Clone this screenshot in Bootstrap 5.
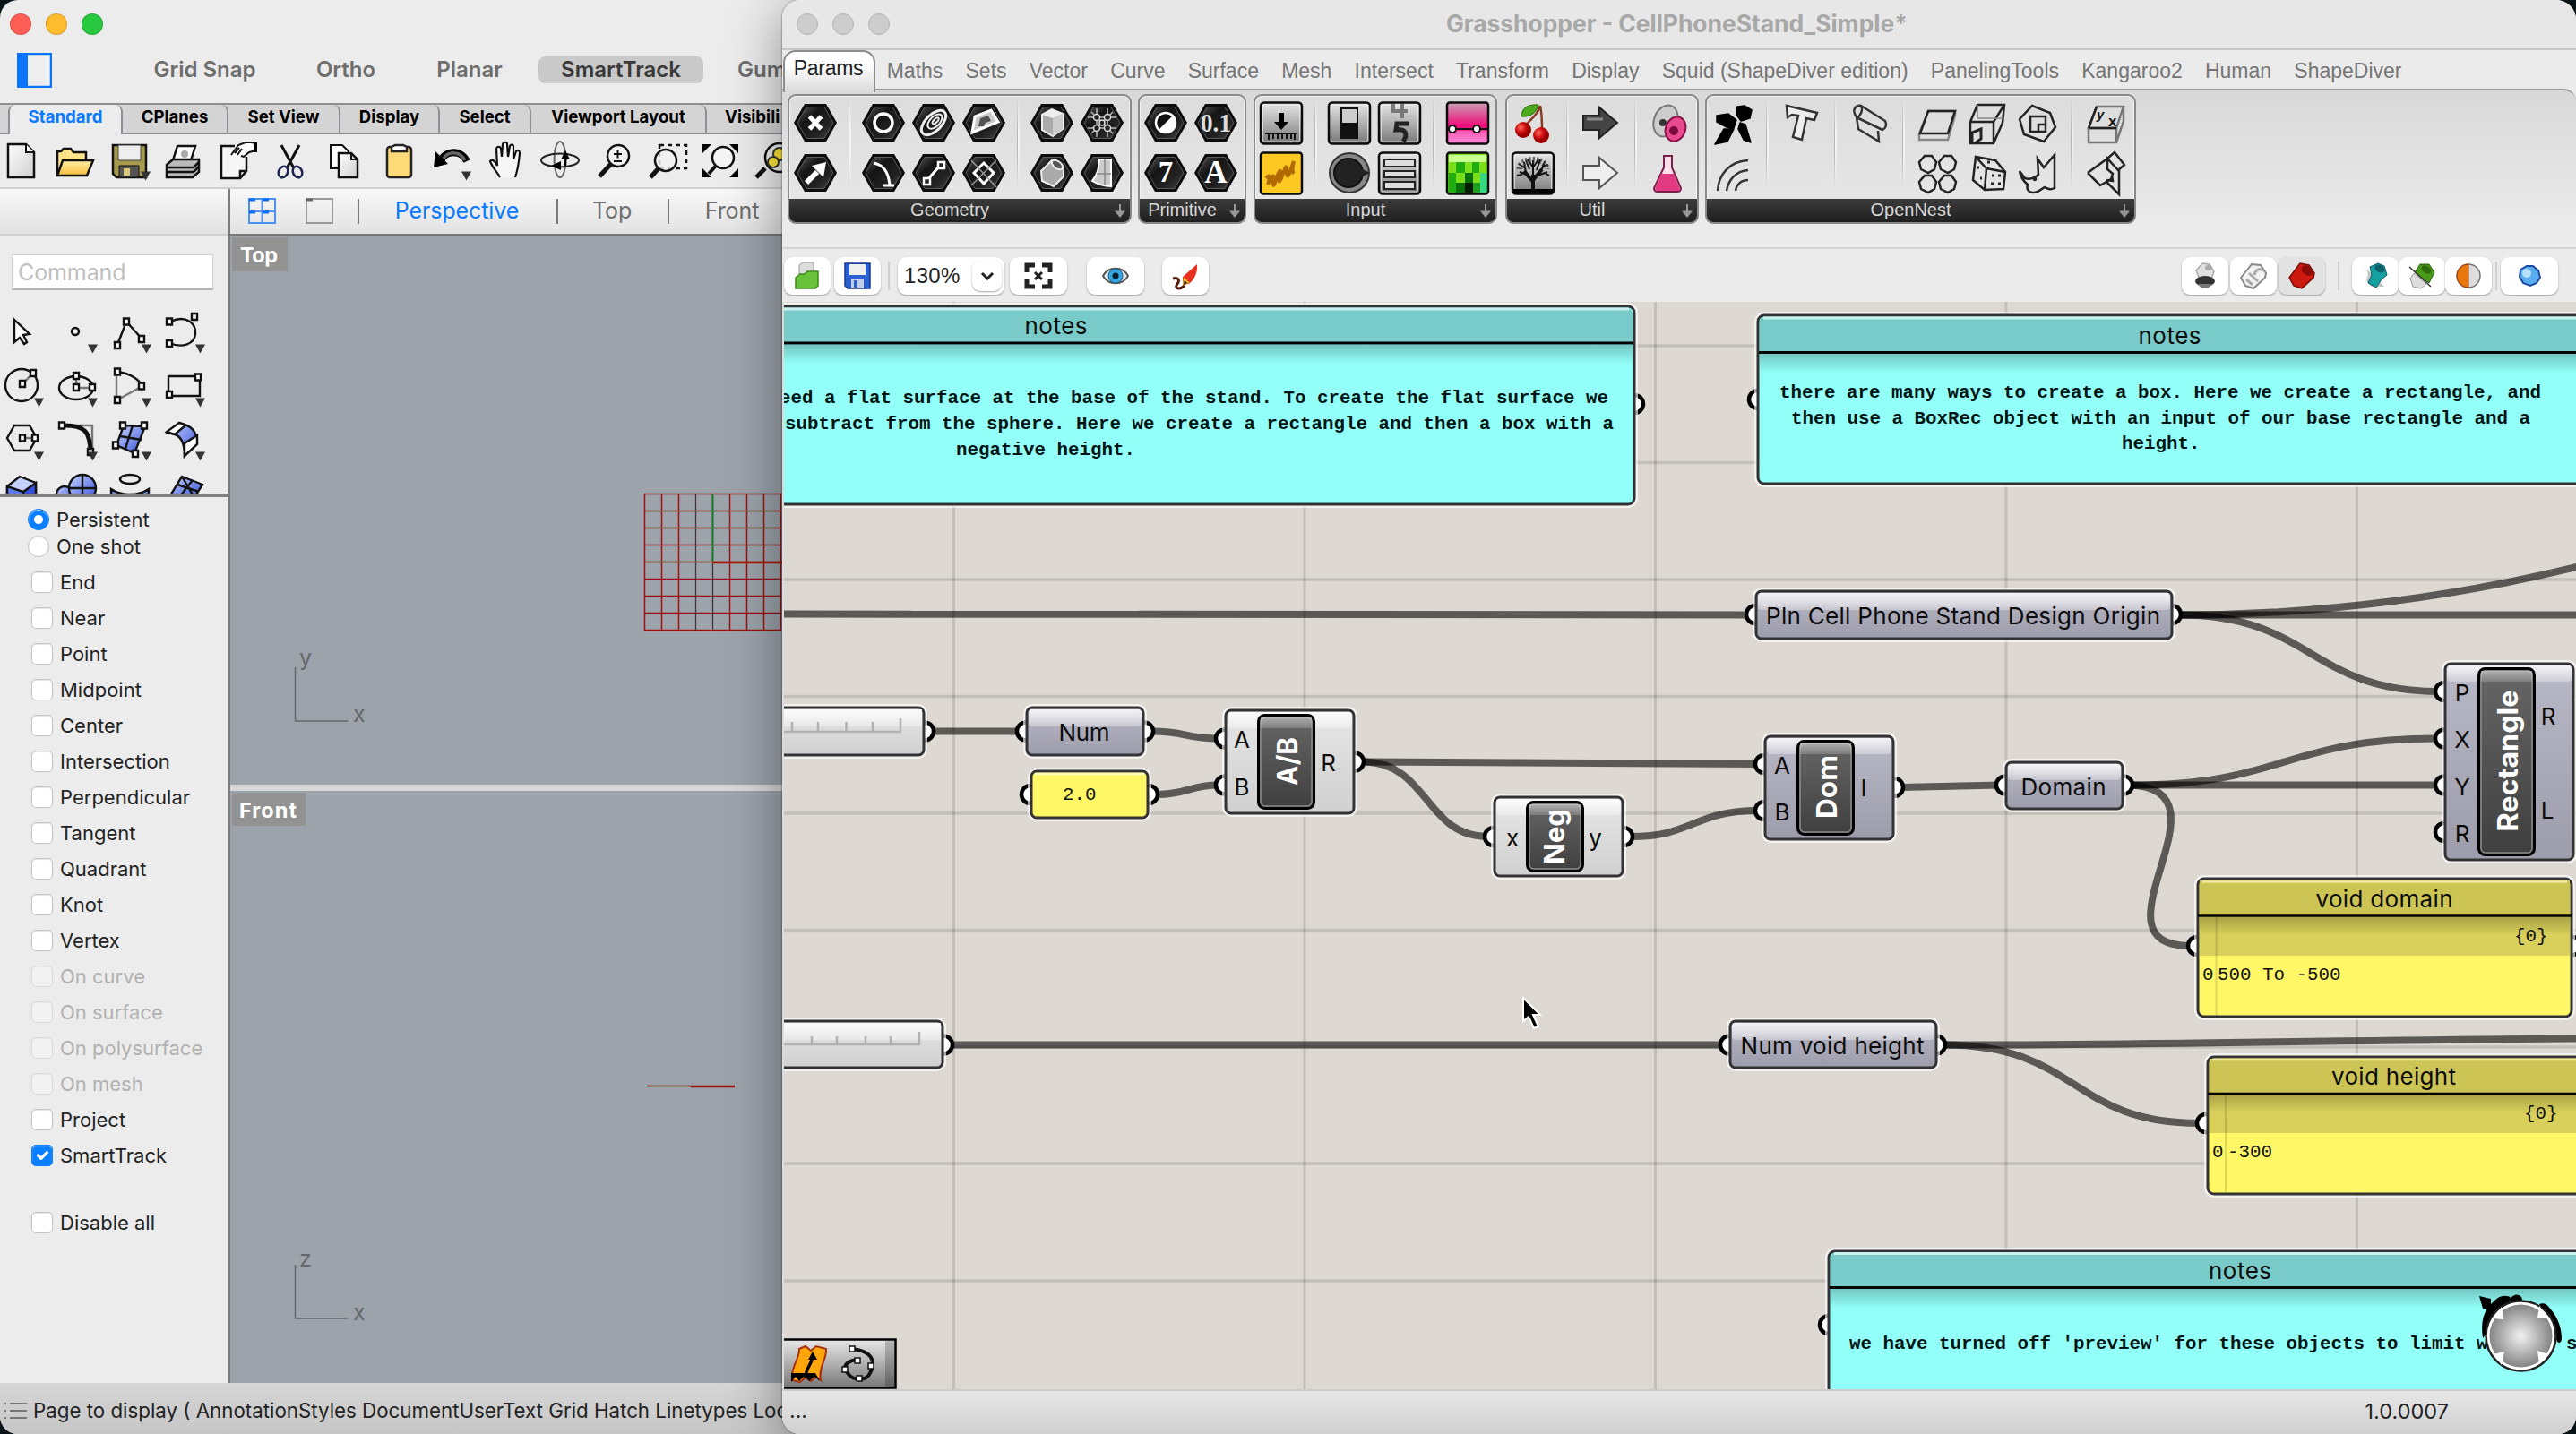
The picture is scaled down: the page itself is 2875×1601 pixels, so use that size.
<!DOCTYPE html>
<html lang="en">
<head>
<meta charset="utf-8">
<title>Grasshopper - CellPhoneStand_Simple*</title>
<link href="https://cdn.jsdelivr.net/npm/bootstrap@5.3.0/dist/css/bootstrap.min.css" rel="stylesheet">
<script src="https://cdn.jsdelivr.net/npm/bootstrap@5.3.0/dist/js/bootstrap.bundle.min.js"></script>
<style>
html,body{height:100%}
body{margin:0;width:2875px;height:1601px;overflow:hidden;background:#08141a;font-family:Inter,"Liberation Sans",sans-serif;color:#232323;line-height:1}
svg{display:block;flex:none}
/* Rhino window */
.rhino{width:905px;height:1601px;margin-right:-32px;background:#ececec;border-radius:20px 0 0 20px;overflow:hidden;flex:none}
.lights{height:54px;padding-left:11px;gap:16px}
.lights i{width:24px;height:24px;border-radius:50%;border:1px solid rgba(0,0,0,.15)}
.modes{height:61px;padding:0 0 13px 19px;font-weight:600;font-size:24px;color:#6e6e6e}
.modes span{flex:none;text-align:center;white-space:nowrap}
.m1{width:161px;margin-left:90px}.m2{width:112px;margin-left:21px}.m3{width:120px;margin-left:22px}
.m4{width:184px;margin-left:17px;background:#c9c9c9;color:#3a3a3a;border-radius:8px;height:30px;line-height:29px}
.m5{margin-left:38px}
.rtabs{height:35px;background:#d4d4d4;border-top:2px solid #8e8e93;border-bottom:2px solid #8e8e93;font-weight:700;font-size:18.6px;color:#000;padding-left:9px}
.rtabs span{flex:none;text-align:center;line-height:26px;height:33px;border-right:2px solid #8e8e93;border-radius:0 8px 0 5px;white-space:nowrap}
.rtabs .on{background:#ececec;color:#0a7aff;border-left:2px solid #8e8e93;border-radius:8px 8px 0 0;margin-bottom:-2px;height:33px}
.rtools{height:61px;border-bottom:2px solid #d0d0d0;padding:3px 0 0 0}
.rtools svg{width:60px;height:52px;flex:none}
.rtools svg:first-child{margin-left:-6px}
.side{width:257px;border-right:2px solid #7b7b7d;flex:none}
.side-top{height:52px;background:linear-gradient(#f8f8f8,#e2e2e2);border-bottom:2px solid #d0d0d0}
.cmd{margin:21px 0 0 13px;width:225px;height:40px;border:1px solid #d2d2d2;border-bottom:2px solid #b4b4b4;background:#fff;color:#bfbfbf;font-size:25px;line-height:39px;padding-left:6px;letter-spacing:-.1px}
.palette{height:231px;overflow:hidden;border-bottom:4px solid #808080}
.snaps{padding-top:10px}
.osnap{height:40px;font-size:22px;padding-left:35px;gap:8px}
.osnap .form-check-input{width:24px;height:24px;margin:0;border:1px solid #c4c4c4;border-radius:5px;background-color:#fff;box-shadow:inset 0 1px 1px #e4e4e4;flex:none}
.osnap .form-check-input:checked{background-color:#0a7fff;border-color:#0a7fff}
.osnap .form-check-input[type=radio]{border-radius:50%}
.osnap .form-check-input[type=radio]:checked{background-image:radial-gradient(circle,#fff 4.500px,transparent 5.500px)}
.osnap.rad{height:30px;padding-left:31px}
.osnap.dis{color:#b1b1b1}.osnap.dis .form-check-input{background-color:#f2f2f2;border-color:#dadada}
.osnap.first{margin-top:5px}.osnap.last{margin-top:35px}
.vtabs{height:53px;background:linear-gradient(#f8f8f8,#e2e2e2);border-bottom:3px solid #777;font-size:25px;color:#6e6e6e;padding-bottom:1px}
.vtabs span{flex:none;text-align:center;letter-spacing:-.1px}
.bar{width:2px;height:28px;background:#7a7a7a;flex:none}
.vp{background:#9ca3ab}
.splitter{height:7px;background:#d8d8d8}
.rstat{height:57px;background:linear-gradient(#d6d6d6,#c6c6c6);font-size:22.3px;white-space:nowrap;padding:5px 0 0 4px;gap:7px}
/* Grasshopper window */
.gh{width:2002px;height:1601px;border-radius:20px 22px 20px 20px;overflow:hidden;background:#ebebeb;flex:none}
.ghwrap{border-radius:20px 22px 22px 20px;box-shadow:0 12px 60px rgba(0,0,0,.42),0 0 2px rgba(0,0,0,.7);z-index:2;position:relative;flex:none}
.ghtitle{height:56px;background:#e7e7e7;border-bottom:2px solid #c6c6c6;padding-left:16px}
.ghtitle i{width:24px;height:24px;border-radius:50%;background:#cdcdcd;border:1px solid #b2b2b2;margin-right:16px;flex:none}
.ghtitle b{font-size:26.4px;color:#a8a8a8;font-weight:700;margin-left:605px;white-space:nowrap;padding-bottom:2px}
.ghtabs{height:43px;gap:25.2px;font:23px/46px "Liberation Sans",Arial,sans-serif;color:#757575;padding-left:1px}
.ghtabs span{white-space:nowrap}
.ghtabs .on{width:103px;height:47px;border:2px solid #8c8c8c;border-bottom:0;border-radius:14px 14px 0 0;background:linear-gradient(#fff 30%,#dadada);color:#222;text-align:center;line-height:36px;margin-right:-12.500px;letter-spacing:-.3px;position:relative;z-index:1;padding-right:2px}
.ribbon{height:152px;border-top:2px solid #999;border-radius:0 14px 14px 0;background:linear-gradient(#d8d8d8,#ebebeb);padding:4px 0 0 6px;font-family:"Liberation Sans",Arial,sans-serif}
.grp{height:145px;border:2px solid #8a8a8a;border-radius:9px;background:linear-gradient(#dcdcdc,#e8e8e8);overflow:hidden;flex:none;box-shadow:inset 0 0 0 1px #f2f2f2}
.grp .foot{height:27px;background:linear-gradient(#3c3c3c,#1d1d1d);color:#d8d8d8;font-size:20px;line-height:24px;text-align:center;position:relative;padding-right:22px}
.grp .foot svg{position:absolute;right:3px;top:6px}
.icons{height:115px;padding:2px 0 0 1px}
.icol{width:56px}.icol svg{width:56px;height:56px}
.vsep{width:20px;height:100px;background:linear-gradient(90deg,transparent 9px,#b4b4b4 9px,#b4b4b4 10px,#f4f4f4 10px,#f4f4f4 12px,transparent 12px);-webkit-mask:linear-gradient(transparent,#000 40%,#000 60%,transparent)}
.cbar{height:61px;margin-top:25px;border-top:2px solid #d3d3d3;padding:0 20px 0 2px}
.tb{height:42px;background:#fff;border-radius:9px;box-shadow:0 1px 2px rgba(0,0,0,.35);flex:none}
.tb.on{background:#e2e2e2}
.tsep{width:2px;height:32px;background:#d0d0d0;flex:none}
.ghstat{height:50px;border-top:2px solid #ccc;background:linear-gradient(#e7e7e7,#cfcfcf);font-size:23px;padding:0 142px 3px 8px}
/* canvas */
.wire{fill:none;stroke:#000;stroke-opacity:.59;stroke-width:8}
.grip{fill:#fff;stroke:#000;stroke-width:4.5}
.halo{fill:none;stroke:#fff;stroke-opacity:.65;stroke-width:8}
.edge{stroke:#333336;stroke-width:3}
.gtext{font:26px Inter,sans-serif;fill:#0c0c0c;text-anchor:middle}
.glab{font:bold 31.5px Inter,sans-serif;fill:#fff;text-anchor:middle}
.mono{font:20.83px "Liberation Mono",monospace;fill:#111}
.monob{font:bold 20.83px "Liberation Mono",monospace;fill:#001414}
</style>
</head>
<body class="d-flex">

<svg width="0" height="0" class="position-absolute">
<defs>
<linearGradient id="gHex" x1="0" y1="0" x2="1" y2="1"><stop offset="0" stop-color="#555"/><stop offset=".35" stop-color="#151515"/><stop offset=".7" stop-color="#222"/><stop offset="1" stop-color="#444"/></linearGradient>
<linearGradient id="gGrey" x1="0" y1="0" x2="0" y2="1"><stop offset="0" stop-color="#e8e8e8"/><stop offset="1" stop-color="#777"/></linearGradient>
<linearGradient id="gPap" x1="0" y1="0" x2="1" y2="1"><stop offset="0" stop-color="#fff"/><stop offset="1" stop-color="#cfcfcf"/></linearGradient>
<linearGradient id="gFold" x1="0" y1="0" x2="0" y2="1"><stop offset="0" stop-color="#fff0a8"/><stop offset="1" stop-color="#f6bb3a"/></linearGradient>
<linearGradient id="gBlue" x1="0" y1="0" x2="1" y2="1"><stop offset="0" stop-color="#c8d4ff"/><stop offset="1" stop-color="#3450d8"/></linearGradient>
<linearGradient id="gParam" x1="0" y1="0" x2="0" y2="1"><stop offset="0" stop-color="#b9b8c6"/><stop offset="1" stop-color="#9d9cab"/></linearGradient>
<linearGradient id="gComp" x1="0" y1="0" x2="0" y2="1"><stop offset="0" stop-color="#e6e6e6"/><stop offset="1" stop-color="#d0d0d0"/></linearGradient>
<linearGradient id="gGloss" x1="0" y1="0" x2="0" y2="1"><stop offset="0" stop-color="#fff" stop-opacity=".85"/><stop offset="1" stop-color="#fff" stop-opacity=".32"/></linearGradient>
<linearGradient id="gInner" x1="0" y1="0" x2="0" y2="1"><stop offset="0" stop-color="#666"/><stop offset="1" stop-color="#3f3f3f"/></linearGradient>
<linearGradient id="gShade" x1="0" y1="0" x2="0" y2="1"><stop offset="0" stop-color="#000" stop-opacity=".22"/><stop offset="1" stop-color="#000" stop-opacity="0"/></linearGradient>
<linearGradient id="gPink" x1="0" y1="0" x2="0" y2="1"><stop offset="0" stop-color="#c9a0b4"/><stop offset=".55" stop-color="#f0107c"/><stop offset=".66" stop-color="#f0107c"/><stop offset=".7" stop-color="#ff5cb8"/><stop offset="1" stop-color="#f48ad8"/></linearGradient>
<radialGradient id="gBall"><stop offset="0" stop-color="#f2f2f2"/><stop offset="1" stop-color="#858585"/></radialGradient>
<radialGradient id="gRed" cx=".35" cy=".35"><stop offset="0" stop-color="#ff7060"/><stop offset=".6" stop-color="#d01010"/><stop offset="1" stop-color="#900"/></radialGradient>
<symbol id="hex" viewBox="0 0 56 56"><path d="M4 28 16 7h24l12 21-12 21H16Z" fill="#0c0c0c"/><path d="M8 28 18 10.500h20L48 28 38 45.500H18Z" fill="url(#gHex)" stroke="#5a5a5a" stroke-width="1"/></symbol>
<symbol id="sq" viewBox="0 0 56 56"><rect x="5" y="5.500" width="46" height="46" rx="4" fill="url(#gGrey)" stroke="#0c0c0c" stroke-width="2.500"/><rect x="7.500" y="8" width="41" height="41" rx="2" fill="none" stroke="#eee" stroke-opacity=".7"/></symbol>
<symbol id="dn" viewBox="0 0 16 16"><path d="M8 0v8" stroke="#999" stroke-width="2"/><path d="M8 15 2 7.500h12Z" fill="#999"/></symbol>
<symbol id="tri" viewBox="0 0 12 10"><path d="M0 0h11L5.500 10Z" fill="#333"/></symbol>
</defs>
</svg>

<!-- ============ Rhino ============ -->
<div class="rhino d-flex flex-column">
  <div class="lights d-flex align-items-center"><i style="background:#ff5f57"></i><i style="background:#febc2e"></i><i style="background:#28c840"></i></div>
  <div class="modes d-flex align-items-center">
    <svg width="39" height="39" viewBox="0 0 39 39"><path d="M1 1h37v37H1Z" fill="#eee" stroke="#0a74ff" stroke-width="2.500"/><path d="M0 0h12v39H0Z" fill="#0a74ff"/></svg>
    <span class="m1">Grid Snap</span><span class="m2">Ortho</span><span class="m3">Planar</span><span class="m4">SmartTrack</span><span class="m5">Gum</span>
  </div>
  <div class="rtabs d-flex">
    <span class="on" style="width:128px">Standard</span><span style="width:118px">CPlanes</span><span style="width:125px">Set View</span><span style="width:111px">Display</span><span style="width:102px">Select</span><span style="width:196px">Viewport Layout</span><span style="padding-left:20px;width:130px;text-align:left">Visibili</span>
  </div>
  <div class="rtools d-flex">
    <svg viewBox="0 0 60 52"><path d="M15 8h20l9 9v28H15Z" fill="url(#gPap)" stroke="#111" stroke-width="2.500"/><path d="M35 8v9h9" fill="#fff" stroke="#111" stroke-width="2"/></svg>
    <svg viewBox="0 0 60 52"><path d="M10 43V16h4l3-3h8l3 4h14v9" fill="#ffe48a" stroke="#111" stroke-width="2.500"/><path d="M10 43 16 26h34l-7 17Z" fill="url(#gFold)" stroke="#111" stroke-width="2.500"/></svg>
    <svg viewBox="0 0 60 52"><path d="M12 9h37v36H16l-4-4Z" fill="#a89a4c" stroke="#111" stroke-width="2.500"/><path d="M18 9h25v17H18Z" fill="#eee" stroke="#444"/><path d="M19 32h22v13H19Z" fill="#555" stroke="#111"/><path d="M24 35h7v8h-7Z" fill="#ddc97a"/><use href="#tri" x="43" y="38" width="12" height="11"/></svg>
    <svg viewBox="0 0 60 52"><path d="M19 26 24 10h20l-5 16Z" fill="#fff" stroke="#111" stroke-width="2.500"/><circle cx="32" cy="19" r="4" fill="#aaa"/><path d="m12 31 7-6h29v14l-7 6H12Z" fill="#bbb" stroke="#111" stroke-width="2.500"/><path d="M12 34h30l6-6M12 39h30l6-6" stroke="#111" stroke-width="2.500" fill="none"/></svg>
    <svg viewBox="0 0 60 52"><path d="M13 10h24M13 10v36h21l7-8V20" fill="#f6f6f6"/><path d="M28 10H13v36h21l7-8V22M34 46v-8h7" fill="none" stroke="#111" stroke-width="2.500"/><path d="m24 20 8-11 8-3h6l6 1v8l-8 2-6 5-3-1M28 18l5-6M31 20l5-7" fill="#fff" stroke="#111" stroke-width="2"/><path d="M49 6h4v11h-4z"/></svg>
    <svg viewBox="0 0 60 52"><path d="m20 9 14 26M40 9 26 35" stroke="#111" stroke-width="3"/><ellipse cx="22" cy="39" rx="5" ry="6.500" fill="none" stroke="#1b2550" stroke-width="2.500" transform="rotate(25 22 39)"/><ellipse cx="38" cy="39" rx="5" ry="6.500" fill="none" stroke="#1b2550" stroke-width="2.500" transform="rotate(-25 38 39)"/></svg>
    <svg viewBox="0 0 60 52"><path d="M15 9h13l7 7v19H15Z" fill="#fff" stroke="#111" stroke-width="2"/><path d="M24 18h14l7 7v20H24Z" fill="url(#gPap)" stroke="#111" stroke-width="2.500"/><path d="M38 18v7h7" fill="none" stroke="#111" stroke-width="2"/></svg>
    <svg viewBox="0 0 60 52"><rect x="18" y="11" width="27" height="34" rx="3" fill="#ffda78" stroke="#222" stroke-width="2.500"/><path d="M23 16v-5l4-2h9l4 2v5Z" fill="#fff" stroke="#222" stroke-width="2.500"/></svg>
    <svg viewBox="0 0 60 52"><path d="M18 27C22 15 40 13 47 27" fill="none" stroke="#000" stroke-width="8"/><path d="M21 24C26 16 39 15 45 26" fill="none" stroke="#666" stroke-width="3.500"/><path d="M10 34 12 16l14 14Z"/><use href="#tri" x="41" y="38" width="12" height="11"/></svg>
    <svg viewBox="0 0 60 52"><path d="M24 45c-3-6-8-10-11-18 2-3 6 0 8 5l-1-19c1-3 4-3 5 0l1 9 1-14c1-3 5-3 5 0l1 14 2-12c1-2 4-2 4 1v14l3-9c2-2 4-1 4 2-1 12-2 18-5 27" fill="#f6f6f6" stroke="#111" stroke-width="2.200"/></svg>
    <svg viewBox="0 0 60 52"><ellipse cx="31" cy="25" rx="6.500" ry="20" fill="none" stroke="#666" stroke-width="2"/><ellipse cx="31" cy="26" rx="21" ry="7.500" fill="none" stroke="#222" stroke-width="2"/><path d="m21 32 11-5v10ZM37 15l-5 10h10Z"/><path d="M37 24v8" stroke="#000" stroke-width="2.500"/></svg>
    <svg viewBox="0 0 60 52"><circle cx="36" cy="21" r="12" fill="#f2f2f2" stroke="#111" stroke-width="2.500"/><path d="M31 19h9m-4.500-4.500v9M31 27h9" stroke="#111" stroke-width="2"/><path d="m28 30-13 14" stroke="#111" stroke-width="5"/></svg>
    <svg viewBox="0 0 60 52"><path d="M22 9h30v26H22Z" fill="none" stroke="#111" stroke-width="2.500" stroke-dasharray="5 4"/><circle cx="29" cy="26" r="12" fill="#f2f2f2" fill-opacity=".8" stroke="#111" stroke-width="2.500"/><path d="m21 35-9 10" stroke="#111" stroke-width="5"/></svg>
    <svg viewBox="0 0 60 52"><circle cx="33" cy="23" r="12" fill="#f4f4f4" stroke="#111" stroke-width="2.500"/><path d="m25 32-8 9" stroke="#111" stroke-width="4"/><path d="M10 8h10L10 18ZM50 8H40l10 10ZM10 45V35l10 10ZM50 45V35L40 45Z"/></svg>
    <svg viewBox="0 0 60 52"><circle cx="36" cy="23" r="16" fill="#eee" stroke="#111" stroke-width="2.500"/><circle cx="36" cy="19" r="7" fill="#ffe838" stroke="#333" stroke-width="2"/><circle cx="29" cy="28" r="6" fill="#ffe838" stroke="#333" stroke-width="2"/><path d="m20 35-10 10" stroke="#111" stroke-width="5"/></svg>
  </div>
  <div class="d-flex flex-grow-1">
    <div class="side d-flex flex-column">
      <div class="side-top"></div>
      <div class="cmd">Command</div>
      <div class="palette">
        <svg width="255" height="227" viewBox="0 324 255 227" fill="none" stroke="#111" stroke-width="2.400">
          <path d="M16 357v25l6-5 5 7 3-2-4-8 7-1Z" fill="#fff"/>
          <circle cx="84" cy="370" r="4"/>
          <path d="m131 385 10-26 18 20"/>
          <path d="M190 359c18-8 29 2 28 14-1 11-14 16-29 10"/>
          <circle cx="24" cy="430" r="18"/><path d="m26 428 11-12" stroke="#777"/>
          <ellipse cx="85" cy="433" rx="19" ry="13"/><path d="M85 420v13h17" stroke="#777"/>
          <path d="M131 415c16 2 25 10 28 16"/><path d="M130 415v32l29-16" stroke="#777"/>
          <path d="M188 420h35v22h-35Z"/>
          <path d="m8 489 8-14h17l8 14-8 14H16Z"/><path d="M25 489h14" stroke="#777"/>
          <path d="M72 475h31v31" stroke="#777"/><path d="M72 475c22 0 29 6 29 31" stroke-width="5"/>
          <path d="m138 475 24 1-12 30-20-9Z" fill="url(#gBlue)"/><path d="m148 475-8 26M134 487l24 4"/>
          <path d="m200 472-13 11 8 2c6 2 11 8 11 24l14-14c0-14-7-20-20-23Z" fill="url(#gBlue)"/><path d="m200 472 7 3-12 10-9-3ZM206 509v-14l14-9v10Z" fill="#fff"/>
          <path d="m8 543 14-11 18 7v16H8Z" fill="#c4d0ff"/><path d="M26 549 40 539v16H26Z" fill="#3450d8"/><path d="M8 543l18 6v4H8Z" fill="#5a7af0" />
          <circle cx="72" cy="552" r="9" fill="url(#gBlue)"/><circle cx="92" cy="545" r="15" fill="url(#gBlue)"/><path d="M92 530v22M78 545h28"/>
          <ellipse cx="145" cy="535" rx="11" ry="5"/><path d="M124 546c12 8 30 8 42 0v8h-42Z" fill="#6a86f0"/>
          <path d="m203 532 23 9-9 14h-28Z" fill="url(#gBlue)"/><path d="m198 541 24 8M215 536l-14 18M203 532l12 20"/>
          <g fill="#fff" stroke-width="2.400"><path d="M128 382h6v7h-6zM138 355.500h6v7h-6zM155 375h6v7h-6zM186 355.500h6v7h-6zM214 350h6v7h-6zM186 380h6v7h-6zM34 413h6v7h-6zM22 425h6v7h-6zM82 416h6v7h-6zM82 429h6v7h-6zM100 429h6v7h-6zM128 411.500h6v7h-6zM155 427.500h6v7h-6zM128 443h6v7h-6zM218 417.500h6v7h-6zM186 437h6v7h-6zM22 485.500h6v7h-6zM36 485.500h6v7h-6zM66 471.500h6v7h-6zM98 501h6v7h-6zM134 471.500h6v7h-6zM158 471.500h6v7h-6zM126 493.500h6v7h-6zM148 503h6v7h-6z"/></g>
          <g stroke="none"><use href="#tri" x="98" y="384" width="12" height="11"/><use href="#tri" x="158" y="384" width="12" height="11"/><use href="#tri" x="218" y="384" width="12" height="11"/><use href="#tri" x="38" y="444" width="12" height="11"/><use href="#tri" x="98" y="444" width="12" height="11"/><use href="#tri" x="158" y="444" width="12" height="11"/><use href="#tri" x="218" y="444" width="12" height="11"/><use href="#tri" x="38" y="504" width="12" height="11"/><use href="#tri" x="98" y="504" width="12" height="11"/><use href="#tri" x="158" y="504" width="12" height="11"/><use href="#tri" x="218" y="504" width="12" height="11"/></g>
        </svg>
      </div>
      <div class="snaps">
        <label class="osnap rad d-flex align-items-center"><input class="form-check-input" type="radio" name="m" checked>Persistent</label>
        <label class="osnap rad d-flex align-items-center"><input class="form-check-input" type="radio" name="m">One shot</label>
        <label class="osnap first d-flex align-items-center"><input class="form-check-input" type="checkbox">End</label>
        <label class="osnap d-flex align-items-center"><input class="form-check-input" type="checkbox">Near</label>
        <label class="osnap d-flex align-items-center"><input class="form-check-input" type="checkbox">Point</label>
        <label class="osnap d-flex align-items-center"><input class="form-check-input" type="checkbox">Midpoint</label>
        <label class="osnap d-flex align-items-center"><input class="form-check-input" type="checkbox">Center</label>
        <label class="osnap d-flex align-items-center"><input class="form-check-input" type="checkbox">Intersection</label>
        <label class="osnap d-flex align-items-center"><input class="form-check-input" type="checkbox">Perpendicular</label>
        <label class="osnap d-flex align-items-center"><input class="form-check-input" type="checkbox">Tangent</label>
        <label class="osnap d-flex align-items-center"><input class="form-check-input" type="checkbox">Quadrant</label>
        <label class="osnap d-flex align-items-center"><input class="form-check-input" type="checkbox">Knot</label>
        <label class="osnap d-flex align-items-center"><input class="form-check-input" type="checkbox">Vertex</label>
        <label class="osnap dis d-flex align-items-center"><input class="form-check-input" type="checkbox">On curve</label>
        <label class="osnap dis d-flex align-items-center"><input class="form-check-input" type="checkbox">On surface</label>
        <label class="osnap dis d-flex align-items-center"><input class="form-check-input" type="checkbox">On polysurface</label>
        <label class="osnap dis d-flex align-items-center"><input class="form-check-input" type="checkbox">On mesh</label>
        <label class="osnap d-flex align-items-center"><input class="form-check-input" type="checkbox">Project</label>
        <label class="osnap d-flex align-items-center"><input class="form-check-input" type="checkbox" checked>SmartTrack</label>
        <label class="osnap last d-flex align-items-center"><input class="form-check-input" type="checkbox">Disable all</label>
      </div>
    </div>
    <div class="flex-grow-1 d-flex flex-column">
      <div class="vtabs d-flex align-items-center">
        <svg width="142" height="30" viewBox="257 221 142 30" fill="none" stroke-width="2"><path d="M278 222h29v27h-29ZM292.500 222v27M278 236h29" stroke="#4a90f5"/><path d="M278 223h7M293 223h7M278 237h7M293 237h7" stroke="#0a6cf5" stroke-width="3"/><path d="M342 222h29v27h-29Z" stroke="#999"/><path d="M342 223h7" stroke="#666" stroke-width="3"/></svg>
        <div class="bar"></div><span style="width:220px;color:#0a7aff;padding-right:2px">Perspective</span><div class="bar"></div><span style="width:122px;padding-right:2px">Top</span><div class="bar"></div><span style="width:142px;padding-right:2px">Front</span>
      </div>
      <svg width="648" height="612" viewBox="257 264 648 612" class="vp">
        <rect x="259" y="265" width="62" height="38" fill="#929292"/>
        <text x="268" y="293" font-size="23.500" font-weight="700" fill="#fff" textLength="42">Top</text>
        <path stroke="#9c1010" stroke-width="1.500" fill="none" d="M719.500 551.500h153M719.500 570.500h153M719.500 589.500h153M719.500 608.500h153M719.500 627.500h153M719.500 646.500h153M719.500 665.500h153M719.500 684.500h153M719.500 703.500h153M719.500 551v153M738.500 551v153M757.500 551v153M814.500 551v153M833.500 551v153M852.500 551v153M871.500 551v153"/>
        <path d="M776.500 551v153M795.500 627v76" stroke="#4a3038" stroke-width="1.300"/>
        <path d="M795.500 551v76" stroke="#137a22" stroke-width="2"/><path d="M795 628h78" stroke="#a81808" stroke-width="2.500"/>
        <path d="M329.500 745v60h59" fill="none" stroke="#66686c" stroke-width="1.500"/>
        <g font-size="25" fill="#66686c"><text x="334" y="743">y</text><text x="394" y="806">x</text></g>
      </svg>
      <div class="splitter"></div>
      <svg width="648" height="661" viewBox="257 883 648 661" class="vp">
        <rect x="259" y="885" width="82" height="37" fill="#929292"/>
        <text x="267" y="913" font-size="23.500" font-weight="700" fill="#fff" textLength="64">Front</text>
        <path d="M722 1212.500h49" stroke="#a01010" stroke-width="1.500"/><path d="M771 1213h49" stroke="#a01010" stroke-width="2.500"/>
        <path d="M329.500 1412v60h59" fill="none" stroke="#66686c" stroke-width="1.500"/>
        <g font-size="25" fill="#66686c"><text x="334" y="1414">z</text><text x="394" y="1474">x</text></g>
      </svg>
    </div>
  </div>
  <div class="rstat d-flex align-items-center"><svg width="26" height="20" viewBox="0 0 26 20"><path d="M7 2h19M7 10h19M7 18h19M1 2h2M1 10h2M1 18h2" stroke="#777" stroke-width="2"/></svg><span>Page to display ( AnnotationStyles DocumentUserText Grid Hatch Linetypes Loc</span></div>
</div>

<!-- ============ Grasshopper ============ -->
<div class="ghwrap">
<div class="gh d-flex flex-column">
  <div class="ghtitle d-flex align-items-center"><i></i><i></i><i></i><b>Grasshopper - CellPhoneStand_Simple*</b></div>
  <div class="ghtabs d-flex">
    <span class="on">Params</span><span>Maths</span><span>Sets</span><span>Vector</span><span>Curve</span><span>Surface</span><span>Mesh</span><span>Intersect</span><span>Transform</span><span>Display</span><span>Squid (ShapeDiver edition)</span><span>PanelingTools</span><span>Kangaroo2</span><span>Human</span><span>ShapeDiver</span>
  </div>
  <div class="ribbon d-flex">
    <div class="grp" style="width:384px">
      <div class="icons d-flex">
        <div class="icol"><svg viewBox="0 0 56 56"><use href="#hex"/><path d="m21.500 21 13 14M34.500 21 21.500 35" stroke="#fff" stroke-width="5"/></svg><svg viewBox="0 0 56 56"><use href="#hex"/><path d="m18 39 12-12" stroke="#fff" stroke-width="6"/><path d="m24 20 16-4-3 17Z" fill="#fff"/></svg></div>
        <div class="vsep"></div>
        <div class="icol"><svg viewBox="0 0 56 56"><use href="#hex"/><circle cx="28" cy="28" r="10" fill="none" stroke="#fff" stroke-width="3.500"/></svg><svg viewBox="0 0 56 56"><use href="#hex"/><path d="M17 17c10 2 16 8 18 24M28 42h12" fill="none" stroke="#fff" stroke-width="3"/></svg></div>
        <div class="icol"><svg viewBox="0 0 56 56"><use href="#hex"/><g fill="none" stroke="#eee" transform="rotate(-45 28 28)"><ellipse cx="28" cy="28" rx="17" ry="9" stroke-width="3"/><ellipse cx="30" cy="28" rx="10" ry="5.500" stroke-width="2"/><ellipse cx="31" cy="28" rx="4.500" ry="2" stroke-width="2"/></g></svg><svg viewBox="0 0 56 56"><use href="#hex"/><path d="m21 36 13-15" stroke="#fff" stroke-width="3"/><path d="M17 34h7v7h-7ZM33 16h7v7h-7Z" fill="#222" stroke="#fff" stroke-width="2.500"/></svg></div>
        <div class="icol"><svg viewBox="0 0 56 56"><use href="#hex"/><path d="m15 39 3-18 18-7 8 13Z" fill="#ccc" stroke="#fff" stroke-width="3"/><path d="m22 32 2-9 9-3 3 6-6 2-2 4Z" fill="#555"/></svg><svg viewBox="0 0 56 56"><use href="#hex"/><path d="M28 17 39 28 28 40 17 28Z" fill="none" stroke="#fff" stroke-width="3"/><path d="m14 14 28 30M42 14 14 42" stroke="#999" stroke-width="1.500"/></svg></div>
        <div class="vsep"></div>
        <div class="icol"><svg viewBox="0 0 56 56"><use href="#hex"/><path d="m17 19 11-6 12 5v17l-11 8-12-7Z" fill="#aaa" stroke="#eee" stroke-width="2"/><path d="m17 19 12 4 11-5-12-5Z" fill="#eee"/><path d="M29 23v20l11-8V18Z" fill="#ccc"/></svg><svg viewBox="0 0 56 56"><use href="#hex"/><path d="m16 26 12-12 13 8v10L30 43l-13-6Z" fill="#aaa" stroke="#eee" stroke-width="2"/><ellipse cx="34" cy="19" rx="7" ry="4" fill="#555" stroke="#eee" stroke-width="2" transform="rotate(35 34 19)"/></svg></div>
        <div class="icol"><svg viewBox="0 0 56 56"><use href="#hex"/><g fill="none" stroke="#bbb" stroke-width="1.500"><path d="M12 22h32M12 34h32M22 12v32M34 12v32M16 16l24 24M40 16 16 40"/></g><g fill="#222" stroke="#ddd" stroke-width="1.500"><circle cx="22" cy="22" r="3.500"/><circle cx="34" cy="22" r="3.500"/><circle cx="22" cy="34" r="3.500"/><circle cx="34" cy="34" r="3.500"/><circle cx="28" cy="28" r="3"/></g></svg><svg viewBox="0 0 56 56"><use href="#hex"/><path d="M25 13h13v30c-6 0-13-1-21-6 6-7 7-13 8-24Z" fill="#ccc" stroke="#fff" stroke-width="2"/><path d="M31 13v29M22 29h16" stroke="#888" stroke-width="1.500"/></svg></div>
      </div>
      <div class="foot">Geometry<svg width="16" height="16"><use href="#dn"/></svg></div>
    </div>
    <div class="grp" style="width:121px;margin-left:7px">
      <div class="icons d-flex">
        <div class="icol"><svg viewBox="0 0 56 56"><use href="#hex"/><circle cx="28" cy="28" r="11" fill="#111" stroke="#fff" stroke-width="2.500"/><path d="M36 20a11 11 0 0 1-16 16Z" fill="#fff"/></svg><svg viewBox="0 0 56 56"><use href="#hex"/><text x="28" y="38" text-anchor="middle" font-family="Liberation Serif" font-weight="700" font-size="33" fill="#fff">7</text></svg></div>
        <div class="icol"><svg viewBox="0 0 56 56"><use href="#hex"/><text x="28" y="38" text-anchor="middle" font-family="Liberation Serif" font-weight="700" font-size="30" textLength="34" lengthAdjust="spacingAndGlyphs" fill="#ddd">0.1</text></svg><svg viewBox="0 0 56 56"><use href="#hex"/><text x="28" y="38.500" text-anchor="middle" font-family="Liberation Serif" font-weight="700" font-size="35" fill="#fff">A</text></svg></div>
      </div>
      <div class="foot">Primitive<svg width="16" height="16"><use href="#dn"/></svg></div>
    </div>
    <div class="grp" style="width:272px;margin-left:8px">
      <div class="icons d-flex">
        <div class="icol"><svg viewBox="0 0 56 56"><use href="#sq"/><path d="M25 17h6v10h5l-8 9-8-9h5Z"/><path d="M10 40h36M14 40v7M19 40v6M24 40v6M29 40v6M34 40v6M39 40v6M43 40v7" stroke="#111" stroke-width="2"/></svg><svg viewBox="0 0 56 56"><rect x="5" y="5.500" width="46" height="46" rx="3" fill="#ffc924" stroke="#0c0c0c" stroke-width="2.500"/><path d="m11 34c4-5 5-2 2 7 4-10 8-14 6-3 0 5 0 5 2 1 3-12 9-20 5-5-1 5 0 4 2 0 4-10 6-18 6-8 0 8 2 6 4 0l4-11c-2 8-2 12 0 14" fill="none" stroke="#b06a00" stroke-width="4"/></svg></div>
        <div class="vsep"></div>
        <div class="icol"><svg viewBox="0 0 56 56"><use href="#sq"/><rect x="18" y="11" width="20" height="35" fill="#111"/><rect x="20" y="13" width="16" height="15" fill="#ccc"/></svg><svg viewBox="0 0 56 56"><circle cx="28" cy="28" r="22" fill="#888" stroke="#333" stroke-width="2"/><circle cx="27" cy="28" r="16" fill="#222" stroke="#111" stroke-width="2"/><path d="m51 28-10-5v10Z" fill="#222"/></svg></div>
        <div class="icol"><svg viewBox="0 0 56 56"><use href="#sq"/><path d="M21 7v8h16M31 7v16" stroke="#777" stroke-width="4" fill="none"/><path d="M38 29H25l-1 7c12-2 13 6 8 13" stroke="#222" stroke-width="5" fill="none"/></svg><svg viewBox="0 0 56 56"><use href="#sq"/><path d="M11 13h34v8H11ZM11 26h34v7H11ZM11 38h34v8H11Z" fill="#ddd" stroke="#222" stroke-width="2"/></svg></div>
        <div class="vsep"></div>
        <div class="icol"><svg viewBox="0 0 56 56"><rect x="5" y="5.500" width="46" height="46" rx="3" fill="url(#gPink)" stroke="#0c0c0c" stroke-width="2.500"/><path d="M5 35h46" stroke="#111" stroke-width="2"/><circle cx="11" cy="35" r="4" fill="#fff" stroke="#111" stroke-width="2"/><circle cx="38" cy="35" r="4" fill="#fff" stroke="#111" stroke-width="2"/></svg><svg viewBox="0 0 56 56"><rect x="5" y="5.500" width="46" height="46" rx="3" fill="#7be01a"/><path d="M7 8h42v8H7z" fill="#c8ff90"/><path d="M15 16h10v12H15zM33 16h8v12h-8zM7 28h8v22H7z" fill="#1fae10"/><path d="M25 28h9v11h-9zM15 39h10v11H15z" fill="#087008"/><path d="M25 39h9v11h-9z" fill="#041c04"/><path d="M34 39h8v11h-8z" fill="#20a020"/><path d="M42 28h8v22h-8z" fill="#35d880"/><rect x="5" y="5.500" width="46" height="46" rx="3" fill="none" stroke="#0c0c0c" stroke-width="2.500"/></svg></div>
      </div>
      <div class="foot">Input<svg width="16" height="16"><use href="#dn"/></svg></div>
    </div>
    <div class="grp" style="width:216px;margin-left:9px">
      <div class="icons d-flex">
        <div class="icol"><svg viewBox="0 0 56 56"><path d="M36 9c-2 10-12 16-18 24M36 9c2 10 2 18 2 26" stroke="#8a3a20" stroke-width="2.500" fill="none"/><path d="M15 21C15 12 22 7 34 8c-2 9-9 14-19 13Z" fill="#4aa81a" stroke="#2a6a08"/><circle cx="17" cy="36" r="9" fill="url(#gRed)"/><circle cx="37" cy="42" r="9" fill="url(#gRed)"/></svg><svg viewBox="0 0 56 56"><use href="#sq"/><path d="M6 46h44v5H6z"/><path d="M28 47V30M28 38l-10-12M28 36l10-12" stroke="#111" stroke-width="4"/><path d="M28 30V14M23 31l-10-4M33 31l11-4M20 28l-2-12M37 26l4-11M28 22l-6-9M28 22l6-9M18 22l-6-4M40 20l5-1M24 24l-4-10M32 25l4-12M16 30l-6 1M41 28l5 3" stroke="#111" stroke-width="2"/><path d="M13 24c0-14 30-14 30 0" fill="none" stroke="#333" stroke-width="7" stroke-dasharray="2 2" opacity=".7"/></svg></div>
        <div class="vsep"></div>
        <div class="icol"><svg viewBox="0 0 56 56"><path d="M8 20h18v-9l20 17-20 17v-9H8Z" fill="#444" stroke="#222" stroke-width="2"/><path d="M12 24h18" stroke="#888" stroke-width="3"/></svg><svg viewBox="0 0 56 56"><path d="M8 20h18v-9l20 17-20 17v-9H8Z" fill="#eee" stroke="#555" stroke-width="2"/></svg></div>
        <div class="vsep"></div>
        <div class="icol"><svg viewBox="0 0 56 56"><ellipse cx="24" cy="26" rx="13" ry="18" fill="#ccc" stroke="#777" stroke-width="2" transform="rotate(20 24 26)"/><circle cx="21" cy="28" r="4" fill="#333"/><ellipse cx="35" cy="35" rx="11" ry="14" fill="#e84a90" stroke="#8a1048" stroke-width="2" transform="rotate(20 35 35)"/><circle cx="33" cy="37" r="5" fill="#7a0a3a"/></svg><svg viewBox="0 0 56 56"><path d="M22 9h9v13l10 23c0 3-2 4-4 4H15c-2 0-4-1-4-4l11-23Z" fill="#f8e0ea" stroke="#7a2048" stroke-width="2"/><path d="M19 29h14l7 17c0 2-1 2-3 2H15c-2 0-3-1-3-2Z" fill="#e23a82"/></svg></div>
      </div>
      <div class="foot">Util<svg width="16" height="16"><use href="#dn"/></svg></div>
    </div>
    <div class="grp" style="width:481px;margin-left:7px">
      <div class="icons d-flex">
        <div class="icol"><svg viewBox="0 0 56 56"><path d="m33 10 8-1 8 5-2 9-10 3-5-7ZM10 20l13-2 9 7-3 9-8-1-11-6ZM36 28l6 2 6 20-8-3-6-12ZM18 35h11l-7 14-14 3Z" stroke="#000" stroke-width="1.500" stroke-linejoin="round"/></svg><svg viewBox="0 0 56 56" fill="none" stroke="#333" stroke-width="2.500"><path d="M11 48C12 30 24 15 45 14M21 48c2-12 10-22 24-23M31 48c1-7 6-12 14-12"/></svg></div>
        <div class="vsep"></div>
        <div class="icol"><svg viewBox="0 0 56 56"><path d="m12 9 34 8-3 8-9-2-5 24-10-3 6-24-7-1-5 3Z" fill="#eee" stroke="#333" stroke-width="2.500"/></svg></div>
        <div class="vsep"></div>
        <div class="icol"><svg viewBox="0 0 56 56" fill="none" stroke="#333" stroke-width="2.500"><path d="m19 9 27 17c2 4 1 8-3 10L14 22M14 22l2 13 23 14-1-12"/><path d="M19 9c-6-1-9 4-7 9 1 4 4 5 6 1 2-3 3-6 1-10Z"/></svg></div>
        <div class="vsep"></div>
        <div class="icol"><svg viewBox="0 0 56 56" fill="none" stroke-width="2.500"><path d="M8 47V40l10-25h30v5L40 47Z" stroke="#888"/><path d="M18 15h30l-8 25H9Z" stroke="#222"/></svg><svg viewBox="0 0 56 56" fill="none" stroke="#222" stroke-width="2.500"><path d="m14 9 8 0 5 7-2 8-7 4-8-4-2-8ZM36 9h8l5 7-2 8-7 4-8-4-2-8ZM14 31h8l5 7-2 8-7 4-8-4-2-8ZM36 31h8l5 7-2 8-7 4-8-4-2-8Z"/></svg></div>
        <div class="icol"><svg viewBox="0 0 56 56" fill="none" stroke="#222" stroke-width="2.500"><path d="m9 27 8-19h30L45 28 35 51H9Z"/><path d="M9 27h26l12-19M35 27v24"/><path d="M11 51V39l10-4v11l-7 5" stroke-width="3"/><path d="M17 8v15h28" stroke="#888" stroke-width="1.500"/></svg><svg viewBox="0 0 56 56" fill="none" stroke="#222" stroke-width="2.500"><path d="m15 10 22 4 11 13-2 19-21 1L12 36Z"/><path d="m15 10 12 13 21 4M27 23l-2 24"/><path d="M33 31h3M40 31h3M32 40h3M40 40h3M17 22h2M20 34h2M28 16h3" stroke-width="3"/></svg></div>
        <div class="icol"><svg viewBox="0 0 56 56" fill="none" stroke="#222" stroke-width="2.500"><path d="m22 9 20 8 6 16-13 16-22-8-5-17Z"/><path d="M20 21h17v17H20Z M29 38v-8h8"/></svg><svg viewBox="0 0 56 56" fill="none" stroke="#222" stroke-width="2.500"><path d="m8 26 6 8c6 2 12-1 15-4l-1-18 7 10 12-14v37c-4 2-8 1-11-1l-8 5c-9 3-13-2-11-8-5-4-8-9-9-15Z"/><circle cx="25" cy="35" r="1"/></svg></div>
        <div class="vsep"></div>
        <div class="icol"><svg viewBox="0 0 56 56" fill="none" stroke="#777" stroke-width="2.500"><path d="m9 34 9-24h30l-8 24Z"/><path d="M9 34v16h31l8-24V10M40 34v16"/><path d="M9 34h31M9 34l9-24" stroke="#222"/><text x="18" y="24" font-size="15" font-weight="700" font-style="italic" fill="#111" stroke="none">y</text><text x="31" y="32" font-size="17" font-weight="700" fill="#111" stroke="none">x</text></svg><svg viewBox="0 0 56 56" fill="none" stroke="#222" stroke-width="2.500"><path d="m8 28 22-16 8-7 11 14-7 6-12-13v12l6 5-2 6-12 7L8 28M28 37l15 15V25M35 30l1 7-7-1"/></svg></div>
      </div>
      <div class="foot">OpenNest<svg width="16" height="16"><use href="#dn"/></svg></div>
    </div>
  </div>
  <div class="cbar d-flex align-items-center">
    <div class="tb d-flex align-items-center justify-content-center" style="width:52px"><svg width="30" height="32" viewBox="0 0 30 32"><path d="M6 14V4l4-3h12v16Z" fill="#ddd" stroke="#999"/><path d="M2 30V18l5-4h5l3-3h12v16l-3 3Z" fill="#6ac23a" stroke="#3c8a1c" stroke-width="1.500"/></svg></div>
    <div class="tb d-flex align-items-center justify-content-center" style="width:52px;margin-left:4px"><svg width="30" height="30" viewBox="0 0 30 30"><path d="M1 1h28v28H4l-3-3Z" fill="#2a5fd0" stroke="#143a90" stroke-width="1.500"/><path d="M6 2h18v12H6Z" fill="#eee"/><path d="M8 18h14v11H8Z" fill="#c4cfe8"/><path d="M11 20h4v8h-4Z" fill="#2a5fd0"/></svg></div>
    <div class="tsep" style="margin-left:8px"></div>
    <div class="tb d-flex align-items-center justify-content-between" style="width:119px;margin-left:9px;padding:0 3px 0 7px;font:24px 'Liberation Sans',sans-serif"><span style="letter-spacing:.3px;padding-top:1px">130%</span><div class="tb d-flex align-items-center justify-content-center" style="width:33px;height:34px"><svg width="16" height="10" viewBox="0 0 16 10"><path d="m2 2 6 6 6-6" fill="none" stroke="#222" stroke-width="3"/></svg></div></div>
    <div class="tb d-flex align-items-center justify-content-center" style="width:64px;margin-left:6px"><svg width="32" height="30" viewBox="0 0 32 30" fill="none" stroke="#222" stroke-width="5"><path d="M3 11V3h9M20 3h9v8M29 19v8h-9M12 27H3v-8"/><path d="m12 11 8 8M20 11l-8 8" stroke-width="3"/></svg></div>
    <div class="tb d-flex align-items-center justify-content-center" style="width:64px;margin-left:22px"><svg width="30" height="20" viewBox="0 0 30 20"><path d="M1 10C7-1 23-1 29 10 23 21 7 21 1 10Z" fill="#e8eef2" stroke="#555" stroke-width="2"/><circle cx="15" cy="10" r="8" fill="#36a6e0" stroke="#1a5a86"/><circle cx="15" cy="10" r="3.500" fill="#08202e"/></svg></div>
    <div class="tb d-flex align-items-center justify-content-center" style="width:52px;margin-left:20px"><svg width="32" height="32" viewBox="0 0 32 32"><path d="M2 19c6-2 8 2 5 6-4 5 2 7 8 2" fill="none" stroke="#5a1a10" stroke-width="3"/><path d="m13 26 0-9L29 3c1 9-3 17-9 22Z" fill="#e83020"/><path d="m13 26 1-9 7 7Z" fill="#e8b020"/><path d="m14 26 1-5 3 3Z" fill="#111"/></svg></div>
    <div class="tb ms-auto d-flex align-items-center justify-content-center" style="width:52px"><svg width="28" height="32" viewBox="0 0 28 32"><path d="m4 10 7-8 8 1 5 8-3 9H8Z" fill="#e0e0e0" stroke="#aaa" stroke-width="1.500"/><ellipse cx="18" cy="7" rx="4" ry="3" fill="#aaa"/><ellipse cx="14" cy="22" rx="11" ry="6" fill="#333"/><path d="M10 30 6 25h16l-5 5Z" fill="#777"/></svg></div>
    <div class="tb d-flex align-items-center justify-content-center" style="width:52px;margin-left:2px"><svg width="32" height="32" viewBox="0 0 32 32"><path d="m2 18 12-15 10 1 6 9-1 5-13 12-9-3Z" fill="#f2f2f2" stroke="#888" stroke-width="2"/><path d="m8 20 7 6M11 13l10 9M17 15c1-6 6-8 10-5" fill="none" stroke="#aaa" stroke-width="3"/></svg></div>
    <div class="tb on d-flex align-items-center justify-content-center" style="width:52px;margin-left:2px"><svg width="32" height="32" viewBox="0 0 32 32"><path d="m2 18 12-16 10 2 6 9-1 5-13 12-9-3Z" fill="#cc1a10" stroke="#7a0a04" stroke-width="1.500"/><ellipse cx="22" cy="10" rx="7" ry="5" fill="#8a0a04" transform="rotate(35 22 10)"/></svg></div>
    <div class="tsep" style="margin-left:14px"></div>
    <div class="tb d-flex align-items-center justify-content-center" style="width:52px;margin-left:14px"><svg width="32" height="32" viewBox="0 0 32 32"><path d="M2 4c8 6 6 14 4 18l6 6h14" fill="#999" opacity=".6"/><path d="m10 6 9-4 7 3 3 10-6 5-6 9-9-5 4-9Z" fill="#12a0a0" stroke="#0a5c60"/><ellipse cx="21" cy="8" rx="6" ry="4" fill="#086068" transform="rotate(25 21 8)"/></svg></div>
    <div class="tb d-flex align-items-center justify-content-center" style="width:52px"><svg width="32" height="32" viewBox="0 0 32 32"><path d="m3 19 4-6 14 12-6 5-9-2Z" fill="#ddd" stroke="#999"/><path d="m8 12 6-9 10 0 6 9-6 12Z" fill="#4c9a1a" stroke="#245c08"/><ellipse cx="21" cy="9" rx="6" ry="4" fill="#2c6a0a" transform="rotate(35 21 9)"/><path d="m2 6 24 22" stroke="#333" stroke-width="1.500"/></svg></div>
    <div class="tb d-flex align-items-center justify-content-center" style="width:52px"><svg width="30" height="30" viewBox="0 0 30 30"><circle cx="15" cy="15" r="13" fill="#ddd" stroke="#777" stroke-width="1.500"/><path d="M15 2a13 13 0 0 0 0 26Z" fill="#e8780c" stroke="#a03c00"/></svg></div>
    <div class="tsep" style="margin-left:4px"></div>
    <div class="tb d-flex align-items-center justify-content-center" style="width:64px;margin-left:4px"><svg width="26" height="26" viewBox="0 0 26 26"><path d="m3 6 7-4h7l6 5 2 8-4 6-7 3-8-3-4-7Z" fill="#5aaef0" stroke="#1c4aa0" stroke-width="2"/><circle cx="10" cy="10" r="5" fill="#b8e2ff"/></svg></div>
  </div>

  <!-- definition canvas -->
  <svg width="2002" height="1214" viewBox="873 337 2002 1214">
    <rect x="873" y="337" width="2002" height="1214" fill="#ddd9d2"/>
    <path d="M1064.500 337v1214M1456 337v1214M1847.500 337v1214M2239 337v1214M2630.500 337v1214" stroke="#000" stroke-opacity=".12" stroke-width="3"/>
    <path d="M875 386h2000M875 516.500h2000M875 647h2000M875 777.500h2000M875 908h2000M875 1038.500h2000M875 1169h2000M875 1299h2000M875 1430h2000" stroke="#000" stroke-opacity=".12" stroke-width="3.500"/>

    <!-- wires -->
    <g class="wire">
      <path d="M875 685.500 1955 686.500"/>
      <path d="M2432 686.500H2875"/>
      <path d="M2432 686.500C2600 686.500 2750 664 2880 632"/>
      <path d="M2432 686.500C2580 686.500 2578 772 2722 772"/>
      <path d="M1040 816.500H1136"/>
      <path d="M1285 816.500C1325 816.500 1322 824.500 1360 824.500"/>
      <path d="M1292 887C1325 887 1328 876.500 1360 876.500"/>
      <path d="M1520 850.500 1960 853"/>
      <path d="M1520 850.500C1595 850.500 1590 934 1660 934"/>
      <path d="M1820 934C1890 934 1890 905 1962 905"/>
      <path d="M2122 879 2232 876.500"/>
      <path d="M2378 876.500C2550 876.500 2550 824.500 2720 824.500"/>
      <path d="M2378 876.500H2720"/>
      <path d="M2376 876.500C2500 880 2325 1056 2444 1056"/>
      <path d="M1065 1166.500H1922"/>
      <path d="M2170 1166.500C2400 1167 2600 1161 2880 1159.500"/>
      <path d="M2170 1166.500C2320 1166.500 2310 1254 2454 1254"/>
    </g>

    <!-- grips -->
    <g class="grip">
      <circle cx="1824" cy="451" r="10"/><circle cx="1962" cy="446" r="10"/><circle cx="2041" cy="1479" r="10"/>
      <circle cx="1959" cy="686" r="10"/><circle cx="2424" cy="686" r="10"/>
      <circle cx="1032" cy="816.500" r="10"/><circle cx="1145" cy="816.500" r="10"/><circle cx="1277" cy="816.500" r="10"/>
      <circle cx="1150" cy="887" r="10"/><circle cx="1282" cy="887" r="10"/>
      <circle cx="1367" cy="824.500" r="10"/><circle cx="1367" cy="876.500" r="10"/><circle cx="1512" cy="850.500" r="10"/>
      <circle cx="1667" cy="934" r="10"/><circle cx="1812" cy="934" r="10"/>
      <circle cx="1969" cy="853" r="10"/><circle cx="1969" cy="905" r="10"/><circle cx="2114" cy="879" r="10"/>
      <circle cx="2238" cy="876.500" r="10"/><circle cx="2370" cy="876.500" r="10"/>
      <circle cx="2728" cy="772" r="10"/><circle cx="2728" cy="824.500" r="10"/><circle cx="2728" cy="876.500" r="10"/><circle cx="2728" cy="929" r="10"/>
      <circle cx="2452" cy="1056" r="10"/><circle cx="2871" cy="1056" r="10"/><circle cx="2462" cy="1254" r="10"/>
      <circle cx="1053" cy="1166.500" r="10"/><circle cx="1930" cy="1166.500" r="10"/><circle cx="2161" cy="1166.500" r="10"/>
    </g>

    <!-- notes 1 -->
    <rect class="halo" x="800" y="342" width="1024" height="221" rx="7"/>
    <rect class="edge" x="800" y="342" width="1024" height="221" rx="7" fill="#93fff9"/>
    <path d="M873 344h942q7 0 7 7v31H873Z" fill="#78cbc9"/><path d="M873 345h945" stroke="#c8f2f0" stroke-width="3"/>
    <rect x="873" y="385" width="949" height="22" fill="url(#gShade)"/><path d="M873 383h950" stroke="#000" stroke-width="3"/>
    <text class="gtext" x="1178.500" y="373" textLength="70">notes</text>
    <g class="monob"><text x="1795" y="450" text-anchor="end">eed a flat surface at the base of the stand. To create the flat surface we</text><text x="1801" y="479" text-anchor="end">subtract from the sphere. Here we create a rectangle and then a box with a</text><text x="1067" y="508">negative height.</text></g>

    <!-- notes 2 -->
    <rect class="halo" x="1962" y="352" width="960" height="188" rx="7"/>
    <rect class="edge" x="1962" y="352" width="960" height="188" rx="7" fill="#93fff9"/>
    <path d="M2875 354H1970q-6 0-6 7v31H2875Z" fill="#78cbc9"/><path d="M1968 355h907" stroke="#c8f2f0" stroke-width="3"/>
    <rect x="1964" y="395" width="911" height="22" fill="url(#gShade)"/><path d="M1963 393.500h912" stroke="#000" stroke-width="3"/>
    <text class="gtext" x="2421.500" y="384" textLength="70">notes</text>
    <g class="monob"><text x="1986" y="444">there are many ways to create a box. Here we create a rectangle, and</text><text x="1999" y="473">then use a BoxRec object with an input of our base rectangle and a</text><text x="2368" y="501">height.</text></g>

    <!-- notes 3 -->
    <rect class="halo" x="2041" y="1397" width="960" height="188" rx="7"/>
    <rect class="edge" x="2041" y="1397" width="960" height="188" rx="7" fill="#93fff9"/>
    <path d="M2875 1399H2049q-6 0-6 7v31H2875Z" fill="#78cbc9"/><path d="M2047 1399.500h828" stroke="#c8f2f0" stroke-width="3"/>
    <rect x="2043" y="1439" width="832" height="22" fill="url(#gShade)"/><path d="M2042 1437.500h833" stroke="#000" stroke-width="3"/>
    <text class="gtext" x="2500" y="1428" textLength="70">notes</text>
    <text class="monob" x="2064" y="1506">we have turned off 'preview' for these objects to limit what is s</text>

    <!-- floating params -->
    <g>
      <rect class="halo" x="1960" y="660" width="464" height="53" rx="6"/><rect class="edge" x="1960" y="660" width="464" height="53" rx="6" fill="url(#gParam)"/><rect x="1962" y="662" width="460" height="19" fill="url(#gGloss)" rx="4"/>
      <rect class="halo" x="1146" y="790" width="130" height="53" rx="6"/><rect class="edge" x="1146" y="790" width="130" height="53" rx="6" fill="url(#gParam)"/><rect x="1148" y="792" width="126" height="19" fill="url(#gGloss)" rx="4"/>
      <rect class="halo" x="2239" y="851" width="130" height="52" rx="6"/><rect class="edge" x="2239" y="851" width="130" height="52" rx="6" fill="url(#gParam)"/><rect x="2241" y="853" width="126" height="18" fill="url(#gGloss)" rx="4"/>
      <rect class="halo" x="1931" y="1140" width="230" height="52" rx="6"/><rect class="edge" x="1931" y="1140" width="230" height="52" rx="6" fill="url(#gParam)"/><rect x="1933" y="1142" width="226" height="19" fill="url(#gGloss)" rx="4"/>
    </g>
    <g class="gtext">
      <text x="2191" y="697" textLength="440">Pln Cell Phone Stand Design Origin</text>
      <text x="1210" y="827" textLength="57">Num</text>
      <text x="2303" y="888" textLength="95">Domain</text>
      <text x="2045" y="1177" textLength="205">Num void height</text>
    </g>

    <!-- sliders -->
    <rect class="halo" x="800" y="790" width="231" height="53" rx="6"/><rect class="edge" x="800" y="790" width="231" height="53" rx="6" fill="url(#gComp)"/><rect x="870" y="792" width="159" height="19" fill="url(#gGloss)"/>
    <path d="M875 817h131M884 806v11M913 806v11M944.500 806v11M974 806v11M1005 802v15" stroke="#b2b2b2" stroke-width="2.500"/>
    <rect class="halo" x="800" y="1140" width="252" height="52" rx="6"/><rect class="edge" x="800" y="1140" width="252" height="52" rx="6" fill="url(#gComp)"/><rect x="870" y="1142" width="180" height="19" fill="url(#gGloss)"/>
    <path d="M875 1166h152M906 1157v10M934 1157v10M966 1157v10M994 1157v10M1026 1152v15" stroke="#b2b2b2" stroke-width="2.500"/>

    <!-- 2.0 -->
    <rect class="halo" x="1151" y="861" width="130" height="52" rx="6"/><rect class="edge" x="1151" y="861" width="130" height="52" rx="6" fill="#fff766"/><path d="M1155 864h122" stroke="#fffcc0" stroke-width="2.500"/>
    <text class="mono" x="1186" y="893">2.0</text>

    <!-- components -->
    <g>
      <rect class="halo" x="1368" y="793" width="143" height="115" rx="6"/><rect class="edge" x="1368" y="793" width="143" height="115" rx="6" fill="url(#gComp)"/><rect x="1370" y="795" width="139" height="18" fill="url(#gGloss)" rx="4"/>
      <rect class="halo" x="1668" y="890" width="143" height="88" rx="6"/><rect class="edge" x="1668" y="890" width="143" height="88" rx="6" fill="url(#gComp)"/><rect x="1670" y="892" width="139" height="18" fill="url(#gGloss)" rx="4"/>
      <rect class="halo" x="1970" y="822" width="143" height="115" rx="6"/><rect class="edge" x="1970" y="822" width="143" height="115" rx="6" fill="url(#gParam)"/><rect x="1972" y="824" width="139" height="18" fill="url(#gGloss)" rx="4"/>
      <rect class="halo" x="2729" y="741" width="143" height="219" rx="6"/><rect class="edge" x="2729" y="741" width="143" height="219" rx="6" fill="url(#gParam)"/><rect x="2731" y="743" width="139" height="18" fill="url(#gGloss)" rx="4"/>
    </g>
    <g fill="url(#gInner)" stroke="#000" stroke-width="3"><rect x="1404.500" y="798.500" width="62" height="104" rx="7"/><rect x="1704.500" y="895.500" width="62" height="77" rx="7"/><rect x="2006.500" y="827.500" width="62" height="104" rx="7"/><rect x="2766.500" y="746.500" width="62" height="208" rx="7"/></g>
    <g fill="none" stroke="#8a8a8a" stroke-width="1.500"><rect x="1407" y="801" width="57" height="99" rx="5"/><rect x="1707" y="898" width="57" height="72" rx="5"/><rect x="2009" y="830" width="57" height="99" rx="5"/><rect x="2769" y="749" width="57" height="203" rx="5"/></g>
    <g fill="url(#gGloss)" opacity=".55"><rect x="1407" y="801" width="57" height="12"/><rect x="1707" y="898" width="57" height="12"/><rect x="2009" y="830" width="57" height="12"/><rect x="2769" y="749" width="57" height="12"/></g>
    <g class="glab">
      <text transform="translate(1448 850) rotate(-90)" textLength="54" lengthAdjust="spacingAndGlyphs">A/B</text>
      <text transform="translate(1746 934) rotate(-90)" textLength="62" lengthAdjust="spacingAndGlyphs">Neg</text>
      <text transform="translate(2050 878.500) rotate(-90)" textLength="71" lengthAdjust="spacingAndGlyphs">Dom</text>
      <text transform="translate(2810 849.500) rotate(-90)" textLength="158" lengthAdjust="spacingAndGlyphs">Rectangle</text>
    </g>
    <g class="gtext">
      <text x="1386" y="835">A</text><text x="1386" y="888">B</text><text x="1482.500" y="861">R</text>
      <text x="1688" y="945">x</text><text x="1780.500" y="945">y</text>
      <text x="1989" y="864">A</text><text x="1989" y="916">B</text><text x="2080" y="889">I</text>
      <text x="2748" y="783">P</text><text x="2748" y="835">X</text><text x="2748" y="888">Y</text><text x="2748" y="940">R</text>
      <text x="2844" y="809">R</text><text x="2843" y="914">L</text>
    </g>

    <!-- void domain -->
    <rect class="halo" x="2453" y="981" width="417" height="154" rx="7"/><rect class="edge" x="2453" y="981" width="417" height="154" rx="7" fill="#fff766"/>
    <path d="M2455 983h413v39h-413Z" fill="#ccc454"/><path d="M2458 984.500h407" stroke="#efe9a0" stroke-width="2.500"/><path d="M2455 1023h413v44h-413Z" fill="#d8d05a"/><rect x="2455" y="1024" width="413" height="20" fill="url(#gShade)"/><path d="M2453 1022.500h417" stroke="#000" stroke-width="2.500"/>
    <path d="M2473.500 1024v109" stroke="#000" stroke-opacity=".13" stroke-width="2"/>
    <text class="gtext" x="2661" y="1013" textLength="153">void domain</text>
    <g class="mono"><text x="2806" y="1051">{0}</text><text x="2458" y="1094">0</text><text x="2475" y="1094">500 To -500</text></g>

    <!-- void height -->
    <rect class="halo" x="2464" y="1180" width="437" height="153" rx="7"/><rect class="edge" x="2464" y="1180" width="437" height="153" rx="7" fill="#fff766"/>
    <path d="M2466 1182h410v39h-410Z" fill="#ccc454"/><path d="M2469 1183h406" stroke="#efe9a0" stroke-width="2.500"/><path d="M2466 1221h410v44h-410Z" fill="#d8d05a"/><rect x="2466" y="1222" width="410" height="20" fill="url(#gShade)"/><path d="M2464 1221h411" stroke="#000" stroke-width="2.500"/>
    <path d="M2484 1222v109" stroke="#000" stroke-opacity=".13" stroke-width="2"/>
    <text class="gtext" x="2671.500" y="1211" textLength="139">void height</text>
    <g class="mono"><text x="2817" y="1249">{0}</text><text x="2469" y="1292">0</text><text x="2486" y="1292">-300</text></g>

    <!-- compass -->
    <path d="m2767 1447 13 3v11h-9ZM2771 1494c-3-20 2-32 11-40q8-9 16-7 3 0 4 2 5-5 9-3 4 1 4 6l-20 10ZM2834 1456q7-3 12 5c9 10 13 22 13 34q-1 6-5 3l-8-23Z"/>
    <circle cx="2813.500" cy="1491.500" r="39" fill="#fff" stroke="#222" stroke-width="2.500"/><circle cx="2813.500" cy="1491.500" r="35" fill="url(#gBall)"/>
    <path d="m2782 1472 10-13 2 14ZM2845 1472l-11-14-2 13ZM2783 1512l12-3-3 15ZM2844 1512l-12-4 2 15Z" fill="#fff"/>

    <!-- quick markup palette -->
    <rect x="870" y="1495.500" width="129.500" height="54" fill="url(#gGrey)" stroke="#000" stroke-width="2.500"/><rect x="988" y="1497" width="10" height="51" opacity=".2"/>
    <path d="m892 1506 7-3 6 5 6-5 11 3c1 12-9 20-6 35l-5-4-6 5-6-4-6 5-9-2c-2-15 8-22 8-35Z" fill="#ffa60c" stroke="#a83010" stroke-width="2"/><path d="m883 1543 5-6 4 5 6-6 5 6 6-5 6 5-5-9-27 0Z"/><path d="M899 1538c0-12 8-14 8-26" fill="none" stroke="#000" stroke-width="3.500"/><path d="m902 1518 5-9 5 9Z"/>
    <path d="M951 1506c20 2 28 12 20 27-4 9-19 9-25 0-7-8 0-14 11-15" fill="none" stroke="#111" stroke-width="4"/>
    <path d="M948 1503h6v6h-6zM969 1522h6v6h-6zM954 1516h6v6h-6zM940 1526h6v6h-6zM956 1536h6v6h-6z" fill="#fff" stroke="#111" stroke-width="1.500"/>

    <rect x="873" y="337" width="2" height="1214" fill="#dcdcdc"/>

    <!-- pointer -->
    <path d="M1700 1114v26l6-5 6 13 5-2-6-13h8Z" fill="#000" stroke="#fff" stroke-width="2"/>
  </svg>
  <div class="ghstat d-flex align-items-center justify-content-between"><span>...</span><span style="font-size:23.500px">1.0.0007</span></div>
</div>
</div>
</body>
</html>
